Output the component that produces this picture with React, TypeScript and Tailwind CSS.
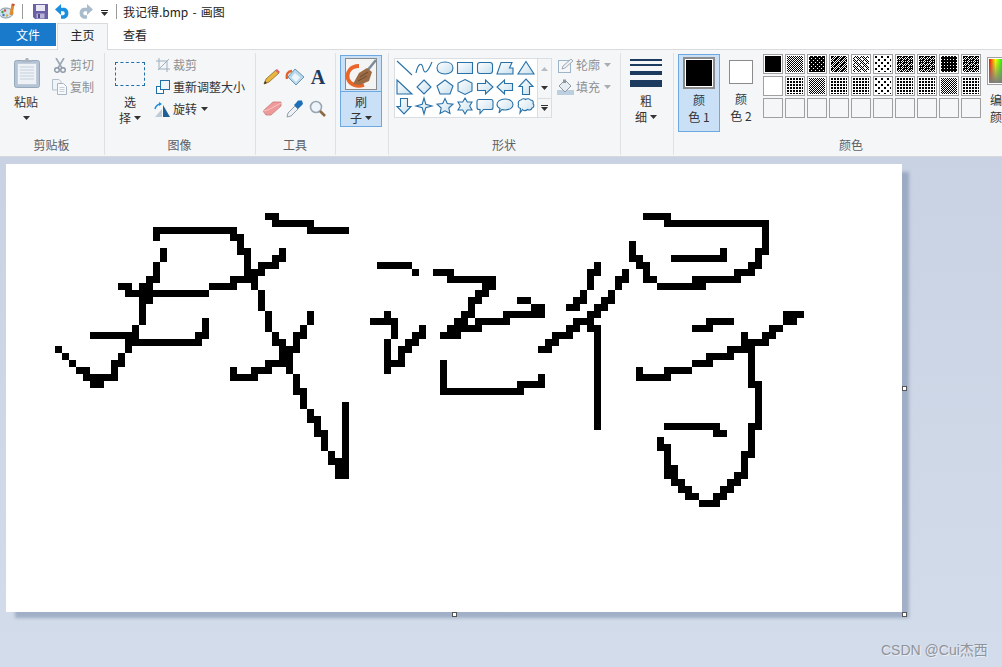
import type { ReactNode } from "react";

const cjk = "font-['Noto_Sans_CJK_SC','Liberation_Sans',sans-serif]";

// spans of black cells in the bitmap, keyed by row. a plain number is one cell
const strokes: Record<number, (number | [number, number])[]> = {
  7: [[37, 38], [91, 94]],
  8: [[38, 43], [94, 108]],
  9: [[21, 32], [43, 48], 108],
  10: [21, [32, 33], 108],
  11: [33, 89, 108],
  12: [22, [33, 34], 39, 89, 102, [107, 108]],
  13: [22, 34, [38, 39], [89, 90], [95, 102], 107],
  14: [21, 34, [36, 38], [53, 57], 84, [90, 91], [106, 107]],
  15: [21, [34, 36], 58, [61, 63], [83, 84], 88, 91, [104, 106]],
  16: [[20, 21], [32, 35], [63, 69], 83, [87, 88], [91, 92], [98, 104]],
  17: [[16, 17], [19, 20], [29, 32], 35, [68, 69], 83, 87, [93, 99]],
  18: [[17, 28], 36, [67, 68], 82, 86],
  19: [[19, 20], 36, [66, 67], [73, 74], [81, 82], [85, 86]],
  20: [19, 36, 66, [75, 76], [80, 81], [84, 85]],
  21: [19, 37, 43, 54, [65, 66], [71, 76], [83, 84], [111, 113]],
  22: [19, 28, 37, 43, [52, 55], [64, 65], [67, 71], [81, 83], [100, 103], [111, 112]],
  23: [18, 28, 37, 42, 55, 59, [63, 67], [80, 81], [83, 84], [98, 100], [109, 110]],
  24: [[12, 18], [27, 28], 38, [41, 42], 55, [58, 59], [62, 64], [78, 80], 84, 105, [108, 109]],
  25: [[17, 27], [38, 39], 41, 54, [57, 58], [77, 78], 84, [105, 108]],
  26: [7, 17, [39, 41], 54, [56, 57], [76, 77], 84, [103, 106]],
  27: [8, 16, [39, 40], 54, 56, 84, [100, 103], 106],
  28: [9, [15, 16], [37, 40], [54, 56], 62, 84, [98, 100], 106],
  29: [[10, 11], 15, 32, [35, 37], 40, 54, 62, 84, 90, [94, 97], 106],
  30: [[11, 15], [32, 35], 41, 62, 76, 84, [90, 94], 106],
  31: [[12, 13], 41, 62, [73, 76], 84, [106, 107]],
  32: [[41, 42], [62, 73], 84, 107],
  33: [42, 84, 107],
  34: [42, 48, 84, 107],
  35: [43, 48, 84, 107],
  36: [[43, 44], 48, 84, 107],
  37: [44, 48, 84, [94, 101], [106, 107]],
  38: [[44, 45], 48, [101, 102], 106],
  39: [45, 48, 93, 106],
  40: [45, 48, [93, 94], 106],
  41: [46, 48, 94, [105, 106]],
  42: [[46, 48], 94, 105],
  43: [[47, 48], [94, 95], 105],
  44: [[47, 48], [94, 95], [104, 105]],
  45: [[95, 96], [103, 104]],
  46: [[96, 97], [102, 103]],
  47: [[97, 98], [101, 102]],
  48: [[99, 101]],
};

function Handwriting() {
  return (
    <svg width={896} height={448} viewBox="0 0 896 448" shapeRendering="crispEdges" className="block">
      {Object.entries(strokes).flatMap(([row, spans]) =>
        spans.map((span, i) => {
          const [a, b] = typeof span === "number" ? [span, span] : span;
          return <rect key={`${row}-${i}`} x={a * 7} y={Number(row) * 7} width={(b - a + 1) * 7} height={7} fill="#000" />;
        })
      )}
    </svg>
  );
}

function Caret({ muted = false }: { muted?: boolean }) {
  return (
    <svg width={7} height={4} viewBox="0 0 7 4" className="inline-block shrink-0">
      <polygon points="0,0 7,0 3.5,4" fill={muted ? "#a9adb2" : "#333"} />
    </svg>
  );
}

function Group({ width, label, children }: { width: string; label: string; children: ReactNode }) {
  return (
    <div className={`${width} shrink-0 mt-[3px] h-[102px] border-r border-[#dfe1e4] flex flex-col justify-between`}>
      <div className="flex">{children}</div>
      <div className="text-center text-[12px] leading-[16px] mb-[2px] pr-px text-[#5c6066]">{label}</div>
    </div>
  );
}

function SmallRow({ icon, text, muted, caret, mutedCaret }: { icon: ReactNode; text: string; muted?: boolean; caret?: boolean; mutedCaret?: boolean }) {
  return (
    <div className={`h-[22px] flex items-center text-[12px] ${muted ? "text-[#8d9095]" : "text-[#333]"}`}>
      <span className="w-[19px] h-[16px] flex items-center justify-center shrink-0">{icon}</span>
      <span className="ml-[1px] whitespace-nowrap">{text}</span>
      {caret ? <span className="ml-[4px] flex items-center"><Caret muted={mutedCaret} /></span> : null}
    </div>
  );
}

const shapeStroke = "#2770a8";
const shapePaths = [
  "M3 3L18 17",
  "M2 15C4 5 8 4 9 10S13 16 18 4",
  "M10 4C15 4 18 6.5 18 10S15 16 10 16 2 13.500 2 10 5 4 10 4Z",
  "M2.500 4.500H17.500V15.500H2.500Z",
  "M5 4.500H15Q17.500 4.500 17.500 7V13Q17.500 15.500 15 15.500H5Q2.500 15.500 2.500 13V7Q2.500 4.500 5 4.500Z",
  "M2 16L6 4.500H17L14.500 10H18V16Z",
  "M10 3.500L18 16H2Z",
  "M3 3L18 17H3Z",
  "M10 3L17 10 10 17 3 10Z",
  "M10 3L18 9 15 17H5L2 9Z",
  "M10 2.500L17 6V14L10 17.500 3 14V6Z",
  "M2.500 6.500H10.500V3L18 10 10.500 17V13.500H2.500Z",
  "M17.500 6.500H9.500V3L2 10 9.500 17V13.500H17.500Z",
  "M6.500 17.500V9.500H3L10 2 17 9.500H13.500V17.500Z",
  "M6.500 2.500V10.500H3L10 18 17 10.500H13.500V2.500Z",
  "M10 2L11.800 8.200 18 10 11.800 11.800 10 18 8.200 11.800 2 10 8.200 8.200Z",
  "M10 2.500L12.300 7.500 18 8.200 13.800 12 15 17.500 10 14.800 5 17.500 6.200 12 2 8.200 7.700 7.500Z",
  "M10 2L12.300 6H17L14.700 10 17 14H12.300L10 18 7.700 14H3L5.300 10 3 6H7.700Z",
  "M4 3.500H16Q18 3.500 18 5.500V11.500Q18 13.500 16 13.500H8.500L5 17.500V13.500H4Q2 13.500 2 11.500V5.500Q2 3.500 4 3.500Z",
  "M10 3C15 3 18 5.500 18 8.500S15 14 10 14C9 14 8 14 7 13.500L4 17 5 12.500C3 11.500 2 10 2 8.500 2 5.500 5 3 10 3Z",
  "M5 4C6 2.500 8.500 2.500 9.500 3.500 11 2.500 13.500 2.500 14.500 4 16.500 4 18 6 17 7.500 18.500 9 18 11.500 16 12 15.500 14 13 14.500 11.500 13.500 10 15 7.500 15 6.500 13.500L4 17 4.500 12.500C2.500 12 1.500 10 2.500 8.500 1.500 6.500 3 4 5 4Z",
];

function ShapeGallery() {
  return (
    <div className="ml-[5px] mt-[5px] flex h-[60px] border border-[#dadde1]">
      <svg width={0} height={0} className="absolute">
        <defs>
          <linearGradient id="shapeFill" x1="0" y1="0" x2="1" y2="1">
            <stop offset="0" stopColor="#ffffff" />
            <stop offset="1" stopColor="#c9e0ee" />
          </linearGradient>
        </defs>
      </svg>
      <div className="w-[142px] bg-white grid grid-cols-7 content-start">
        {shapePaths.map((d, i) => (
          <svg key={i} width={20} height={20} viewBox="0 0 20 20" className="block -ml-px -mt-px">
            <path d={d} fill={i < 2 ? "none" : "url(#shapeFill)"} stroke={shapeStroke} strokeWidth={1.1} />
          </svg>
        ))}
      </div>
      <div className="w-[14px] border-l border-[#dadde1] flex flex-col items-center">
        <span className="h-[20px] flex items-center"><svg width={7} height={4} viewBox="0 0 7 4"><polygon points="0,4 7,4 3.500,0" fill="#b9bcc0" /></svg></span>
        <span className="h-[20px] flex items-center"><Caret /></span>
        <span className="h-[19px] w-full border-t border-[#dadde1] flex flex-col items-center justify-center gap-px">
          <span className="w-[7px] h-px bg-[#333]" />
          <Caret />
        </span>
      </div>
    </div>
  );
}

type Dither = "solid" | "white" | "none" | "checker" | "holes" | "mottled" | "light" | "sparse" | "dark" | "grid" | "dots";

// checkerboard of a 6px tile, with some cells dropped and some added
function checker6(drop: number[][], add: number[][]) {
  const cells: number[][] = [];
  for (let y = 0; y < 6; y++) {
    for (let x = 0; x < 6; x++) {
      if ((x + y) % 2 === 0 && !drop.some((d) => d[0] === x && d[1] === y)) cells.push([x, y, 1, 1]);
    }
  }
  return cells.concat(add.map((a) => [a[0], a[1], 1, 1]));
}

// one tile of each dither pattern: [tile size, background, foreground rects]
const tiles: Record<string, [number, string, number[][]]> = {
  checker: [2, "#fff", [[0, 0, 1, 1], [1, 1, 1, 1]]],
  holes: [4, "#000", [[0, 0, 1, 1], [2, 2, 1, 1]]],
  mottled: [6, "#fff", checker6([], [[1, 0], [0, 1], [4, 3], [3, 4], [5, 2]])],
  light: [6, "#fff", checker6([[0, 0], [3, 3], [2, 2], [5, 5]], [])],
  sparse: [6, "#fff", [[0, 0, 1.500, 1.500], [3, 3, 1.500, 1.500]]],
  dark: [6, "#fff", checker6([], [[1, 0], [0, 1], [3, 0], [4, 3], [3, 4], [1, 4]])],
  grid: [3, "#000", []],
  dots: [3, "#fff", [[0, 0, 2, 2]]],
};

function Swatch({ kind, id }: { kind: Dither; id: string }) {
  if (kind === "none") return <div className="w-[20px] h-[20px] border border-[#a0a0a0]" />;
  const tile = tiles[kind];
  return (
    <div className="w-[20px] h-[20px] border border-[#a0a0a0] bg-white p-px">
      {tile ? (
        <svg width={16} height={16} shapeRendering="crispEdges" className="block">
          <defs>
            <pattern id={id} width={tile[0]} height={tile[0]} patternUnits="userSpaceOnUse">
              <rect width={tile[0]} height={tile[0]} fill={tile[1]} />
              {kind === "grid" ? <rect width={1} height={1} fill="#fff" /> : null}
              {tile[2].map((r, i) => (
                <rect key={i} x={r[0]} y={r[1]} width={r[2]} height={r[3]} fill={tile[1] === "#000" ? "#fff" : "#000"} />
              ))}
            </pattern>
          </defs>
          <rect width={16} height={16} fill={`url(#${id})`} />
        </svg>
      ) : (
        <div className={`w-[16px] h-[16px] ${kind === "solid" ? "bg-black" : "bg-white"}`} />
      )}
    </div>
  );
}

const palette: Dither[] = [
  "solid", "checker", "holes", "mottled", "light", "sparse", "dark", "dark", "grid", "dark",
  "white", "dots", "checker", "dots", "dots", "sparse", "dots", "dots", "checker", "dots",
  ...Array<Dither>(10).fill("none"),
];

export default function App() {
  return (
    <div className={`${cjk} relative w-[1002px] h-[667px] overflow-hidden flex flex-col text-[12px] text-[#333] bg-linear-to-b from-[#c5cfe0] to-[#d3dcea]`}>
      {/* title bar */}
      <div className="h-[23px] bg-white flex items-center shrink-0">
        <svg width={17} height={17} viewBox="0 0 17 17" className="-ml-px">
          <ellipse cx={7} cy={10} rx={7} ry={5} fill="#cfe2ee" stroke="#7d96aa" />
          <circle cx={3.500} cy={9} r={1.200} fill="#3f9e4a" />
          <circle cx={6} cy={7.500} r={1.200} fill="#d94a3a" />
          <circle cx={4.500} cy={12} r={1.200} fill="#3a76c8" />
          <circle cx={8} cy={12.500} r={1.200} fill="#e0b030" />
          <path d="M14 1L12 12" stroke="#e08a2a" strokeWidth={3} />
          <path d="M13 1.500L15.500 2" stroke="#c9503a" strokeWidth={2} />
        </svg>
        <span className="ml-[6px] w-px h-[15px] bg-[#9a9a9a]" />
        <svg width={15} height={15} viewBox="0 0 15 15" className="ml-[10px]">
          <path d="M0 0H15V15H2L0 13Z" fill="#6b5fa6" />
          <rect x={3} y={1} width={9} height={6} fill="#e9e7f3" />
          <rect x={3.500} y={9.500} width={8} height={5} fill="#b8b2d6" />
          <rect x={5} y={10} width={2} height={4} fill="#544a8c" />
        </svg>
        <svg width={16} height={15} viewBox="0 0 16 15" className="ml-[7px]">
          <path d="M3 5.500H9A4 4 0 0 1 9 13H6" fill="none" stroke="#1b8fdf" strokeWidth={3.600} />
          <path d="M6 0V11L0 5.500Z" fill="#1b8fdf" />
        </svg>
        <svg width={16} height={15} viewBox="0 0 16 15" className="ml-[6px]">
          <path d="M13 5.500H7A4 4 0 0 0 7 13H10" fill="none" stroke="#a9bccd" strokeWidth={3.600} />
          <path d="M10 0V11L16 5.500Z" fill="#a9bccd" />
        </svg>
        <span className="ml-[8px] flex flex-col items-center gap-px mt-[3px]">
          <span className="w-[7px] h-px bg-[#222]" />
          <Caret />
        </span>
        <span className="ml-[8px] w-px h-[15px] bg-[#9a9a9a]" />
        <span className="ml-[6px] text-[12px] text-[#222] [word-spacing:1.5px]">我记得.bmp - 画图</span>
      </div>

      {/* tabs */}
      <div className="h-[26px] bg-white flex shrink-0 items-start relative z-10">
        <div className="w-[56px] h-[23px] bg-[#1979ca] text-white flex items-center justify-center">文件</div>
        <div className="ml-px w-[51px] h-[27px] bg-[#f5f6f7] border border-b-0 border-[#dadbdc] flex items-center justify-center pb-[4px] text-[#222]">主页</div>
        <div className="w-[54px] h-[23px] flex items-center justify-center text-[#222]">查看</div>
      </div>

      {/* ribbon */}
      <div className="h-[108px] bg-[#f5f6f7] border-t border-b border-[#dadbdc] border-b-[#d4d7dc] flex shrink-0 overflow-hidden">
        <Group width="w-[105px]" label="剪贴板">
          <div className="w-[52px] flex flex-col items-center">
            <svg width={26} height={30} viewBox="0 0 26 30" className="mt-[5px] ml-[2px]">
              <rect x={0.500} y={2.500} width={25} height={27} rx={2} fill="#b4c4d6" stroke="#98a9bc" />
              <rect x={3.500} y={5.500} width={19} height={21} fill="#eef2f6" stroke="#c0ccd8" />
              <path d="M6 9H20M6 12H20M6 15H20M6 18H20M6 21H20" stroke="#c3cedb" />
              <path d="M8 4V2H11L12 0H14L15 2H18V4Z" fill="#a9b4c0" />
            </svg>
            <div className="mt-[6px] leading-[16px]">粘贴</div>
            <div className="h-[16px] flex items-center"><Caret /></div>
          </div>
          <div className="mt-[1px] -ml-[2px] flex flex-col">
            <SmallRow
              muted
              text="剪切"
              icon={
                <svg width={12} height={15} viewBox="0 0 12 15">
                  <path d="M2 0L8 10M10 0L4 10" stroke="#9aa7b5" strokeWidth={1.600} />
                  <circle cx={3} cy={12} r={2.300} fill="none" stroke="#8a97a6" strokeWidth={1.400} />
                  <circle cx={9} cy={12} r={2.300} fill="none" stroke="#8a97a6" strokeWidth={1.400} />
                </svg>
              }
            />
            <SmallRow
              muted
              text="复制"
              icon={
                <svg width={15} height={16} viewBox="0 0 15 16">
                  <path d="M0.500 0.500H7L9 2.500V11H0.500Z" fill="#f2f5f8" stroke="#b3bfcc" />
                  <path d="M5.500 4.500H11.500L14.500 7.500V15.500H5.500Z" fill="#f7f9fb" stroke="#a7b5c4" />
                  <path d="M7.500 8.500H12.500M7.500 10.500H12.500M7.500 12.500H12.500" stroke="#c5d0db" />
                </svg>
              }
            />
          </div>
        </Group>

        <Group width="w-[151px]" label="图像">
          <div className="w-[50px] flex flex-col items-center">
            <div className="ml-[-1px] mt-[9px] w-[30px] h-[24px] border border-dashed border-[#1f6fa8]" />
            <div className="mt-[8px] leading-[16px]">选</div>
            <div className="leading-[16px] flex items-center gap-[3px]">择<Caret /></div>
          </div>
          <div className="mt-[1px] -ml-[2px] flex flex-col">
            <SmallRow
              muted
              text="裁剪"
              icon={
                <svg width={14} height={14} viewBox="0 0 14 14">
                  <path d="M3 0V11H14M0 3H11V14M2 12L13 1" fill="none" stroke="#9eafc1" />
                </svg>
              }
            />
            <SmallRow
              text="重新调整大小"
              icon={
                <svg width={14} height={14} viewBox="0 0 14 14">
                  <rect x={0.500} y={6.500} width={7} height={7} fill="#fff" stroke="#1f6fa8" />
                  <rect x={4.500} y={0.500} width={9} height={9} fill="#eef5fa" stroke="#1f6fa8" />
                </svg>
              }
            />
            <SmallRow
              caret
              text="旋转"
              icon={
                <svg width={17} height={15} viewBox="0 0 17 15">
                  <path d="M9 15V3L16 15Z" fill="#1f5f96" />
                  <path d="M1 15L8 7V15Z" fill="#bfcbd8" />
                  <path d="M1 7Q2 3 6 2" fill="none" stroke="#1b8fdf" strokeWidth={1.500} />
                  <path d="M5 0L8 2 5 4Z" fill="#1b8fdf" />
                </svg>
              }
            />
          </div>
        </Group>

        <Group width="w-[80px]" label="工具">
          <div className="ml-[6px] mt-[15px] grid grid-cols-[repeat(3,20px)] gap-x-[3px] gap-y-[14px]">
            <svg width={20} height={18} viewBox="0 0 20 18">
              <path d="M2 16L4 11 14 2 17 5 7 14Z" fill="#e9b73f" stroke="#8a6a2a" strokeWidth={0.800} />
              <path d="M2 16L3 13 5 15Z" fill="#333" />
              <path d="M13 2.500L15 1 18 4 16.500 5.500Z" fill="#d9646a" />
            </svg>
            <svg width={20} height={18} viewBox="0 0 20 18">
              <path d="M10 1L19 9 11 17 3 9Z" fill="#b9d9ee" stroke="#6d93b0" />
              <path d="M10 5L15 9.500 11 14 6.500 9.500Z" fill="#eef6fb" />
              <path d="M7 3C3 3 1 6 2 11" fill="none" stroke="#e2622a" strokeWidth={2.400} />
            </svg>
            <div className="w-[20px] h-[18px] flex items-center justify-center font-['Liberation_Serif',serif] font-bold text-[20px] leading-none text-[#1d3b5f]">A</div>
            <svg width={20} height={18} viewBox="0 0 20 18">
              <path d="M1 11L11 2H19V6L9 15H4Z" fill="#ef9a9a" stroke="#c97b7b" strokeWidth={0.800} />
              <path d="M1 11L6 10 19 3" fill="none" stroke="#f7c4c4" />
            </svg>
            <svg width={20} height={18} viewBox="0 0 20 18">
              <path d="M2 17L3 13 10 6 13 9 6 16Z" fill="#eef2f6" stroke="#7a8896" strokeWidth={0.800} />
              <path d="M9 5L11 3 13 0.500 17 0.500 18 4 15 7 13 9Z" fill="#1f6fb8" />
            </svg>
            <svg width={20} height={18} viewBox="0 0 20 18">
              <circle cx={8} cy={7} r={5.500} fill="#eef5fa" stroke="#9aa7b3" strokeWidth={1.600} />
              <path d="M12 11L17 16" stroke="#8a6a45" strokeWidth={2.600} />
            </svg>
          </div>
        </Group>

        <Group width="w-[53px]" label="">
          <div className="ml-[4px] mt-[2px] w-[42px] h-[72px] bg-[#c9e0f7] border border-[#6ea8e0] flex flex-col items-center">
            <div className="h-[36px] w-full border-b border-[#6ea8e0] flex items-center justify-center">
              <svg width={32} height={32} viewBox="0 0 32 32">
                <rect x={0.500} y={0.500} width={31} height={31} fill="#f4f4f4" stroke="#8b8b8b" />
                <path d="M31 2L22 13" stroke="#7d8b99" strokeWidth={2.600} />
                <path d="M14 8C6 8 1 14 3 21 5 27 12 29 19 27" fill="none" stroke="#e9662a" strokeWidth={3.800} />
                <path d="M14 15L22 10 27 14 24 23 15 27 8 26Z" fill="#9a6b45" />
                <path d="M15 19L23 14M13 23L22 18" stroke="#70492c" />
              </svg>
            </div>
            <div className="leading-[16px] mt-[2px]">刷</div>
            <div className="leading-[16px] flex items-center gap-[3px]">子<Caret /></div>
          </div>
        </Group>

        <Group width="w-[232px]" label="形状">
          <ShapeGallery />
          <div className="mt-[1px] ml-[4px] flex flex-col">
            <SmallRow
              muted
              caret
              mutedCaret
              text="轮廓"
              icon={
                <svg width={16} height={15} viewBox="0 0 16 15">
                  <rect x={0.500} y={2.500} width={12} height={12} fill="none" stroke="#9db4c9" />
                  <path d="M4 11L5 8 13 1 15 3 7 10Z" fill="#eef1f4" stroke="#8d98a3" strokeWidth={0.800} />
                </svg>
              }
            />
            <SmallRow
              muted
              caret
              mutedCaret
              text="填充"
              icon={
                <svg width={17} height={16} viewBox="0 0 17 16">
                  <rect x={0} y={11} width={17} height={5} fill="#bccfe0" />
                  <path d="M8 1L14 7 8 13 2 7Z" fill="#e6edf3" stroke="#8d98a3" />
                  <path d="M6 0.500H9V4H6Z" fill="#8d98a3" />
                </svg>
              }
            />
          </div>
        </Group>

        <Group width="w-[53px]" label="">
          <div className="ml-[9px] w-[32px] flex flex-col items-center">
            <div className="mt-[6px] h-[28px] w-[32px] flex flex-col justify-between">
              <div className="h-[1.500px] bg-[#1d3b5f]" />
              <div className="h-[2px] bg-[#1d3b5f] -mt-px" />
              <div className="h-[4px] bg-[#1d3b5f]" />
              <div className="h-[7px] bg-[#1d3b5f]" />
            </div>
            <div className="mt-[6px] leading-[16px]">粗</div>
            <div className="leading-[16px] flex items-center gap-[3px]">细<Caret /></div>
          </div>
        </Group>

        <div className="flex-1 mt-[3px] h-[102px] flex flex-col justify-between min-w-0">
          <div className="flex">
            <div className="ml-[4px] mt-[1px] w-[42px] h-[78px] bg-[#c9e0f7] border border-[#6ea8e0] flex flex-col items-center shrink-0">
              <div className="mt-[2px] w-[32px] h-[32px] border-2 border-[#8b8b8b] p-px bg-white">
                <div className="w-full h-full bg-black" />
              </div>
              <div className="mt-[3px] leading-[16px]">颜</div>
              <div className="leading-[17px]">色 1</div>
            </div>
            <div className="w-[42px] flex flex-col items-center shrink-0">
              <div className="mt-[7px] w-[24px] h-[24px] border border-[#8b8b8b] bg-white" />
              <div className="mt-[7px] leading-[16px]">颜</div>
              <div className="leading-[17px]">色 2</div>
            </div>
            <div className="ml-px mt-[1px] grid grid-cols-[repeat(10,20px)] gap-[2px] content-start shrink-0">
              {palette.map((kind, i) => (
                <Swatch key={i} kind={kind} id={`dither-${i}`} />
              ))}
            </div>
            <div className="ml-[1px] w-[40px] flex flex-col items-center shrink-0">
              <div className="mt-[4px] w-[30px] h-[28px] border border-[#a0a0a0] p-px bg-white">
                <div className="w-full h-full bg-[linear-gradient(to_bottom,transparent,#7d7d7d),linear-gradient(to_right,#f00,#ff0,#0f0,#0ff,#00f)]" />
              </div>
              <div className="mt-[7px] leading-[16px]">编辑</div>
              <div className="leading-[17px]">颜色</div>
            </div>
          </div>
          <div className="w-[354px] text-center text-[12px] leading-[16px] mb-[2px] text-[#5c6066]">颜色</div>
        </div>
      </div>

      {/* canvas */}
      <div className="relative flex-1 pl-[6px] pt-[7px]">
        <div className="relative w-[896px] h-[448px] bg-white shadow-[8px_7px_3px_-1px_rgba(112,132,165,0.5)]">
          <Handwriting />
          <span className="absolute left-[896px] top-[222px] w-[5px] h-[5px] bg-white border border-[#555]" />
          <span className="absolute left-[896px] top-[448px] w-[5px] h-[5px] bg-white border border-[#555]" />
          <span className="absolute left-[446px] top-[448px] w-[5px] h-[5px] bg-white border border-[#555]" />
        </div>
        <div className="absolute left-[881px] top-[483px] font-['Liberation_Sans','Noto_Sans_CJK_SC',sans-serif] text-[14px] leading-[20px] text-[#8e949c] [text-shadow:1px_1px_0_rgba(255,255,255,0.5)] whitespace-nowrap">
          CSDN @Cui杰西
        </div>
      </div>
    </div>
  );
}
